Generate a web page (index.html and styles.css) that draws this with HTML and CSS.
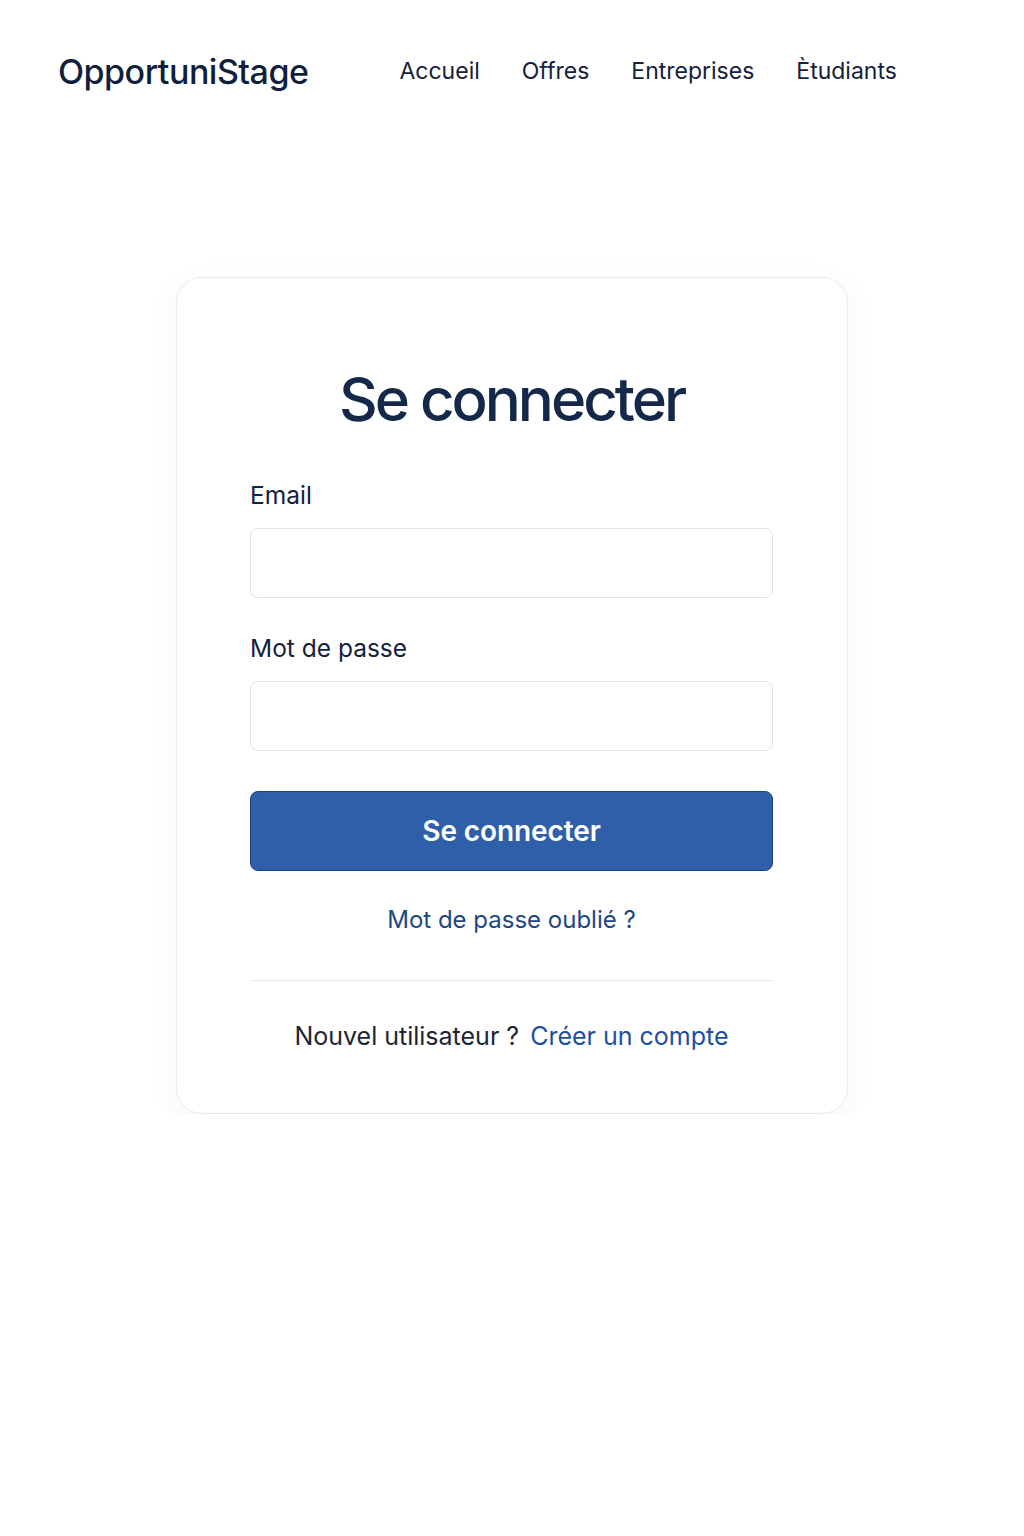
FILE: index.html
```html
<!DOCTYPE html>
<html lang="fr">
<head>
<meta charset="utf-8">
<title>Se connecter - OpportuniStage</title>
<link rel="stylesheet" href="styles.css">
</head>
<body>
<header class="topbar">
  <a class="logo" href="#">OpportuniStage</a>
  <nav class="nav">
    <a href="#">Accueil</a>
    <a href="#">Offres</a>
    <a href="#">Entreprises</a>
    <a href="#">Ètudiants</a>
  </nav>
</header>
<main class="main">
  <section class="card">
    <h1 class="title">Se connecter</h1>
    <form class="form">
      <label class="field">
        <span class="label">Email</span>
        <input class="input" type="email">
      </label>
      <label class="field">
        <span class="label">Mot de passe</span>
        <input class="input" type="password">
      </label>
      <button class="btn" type="button">Se connecter</button>
    </form>
    <a class="forgot" href="#">Mot de passe oublié ?</a>
    <hr class="divider">
    <p class="signup">Nouvel utilisateur ? <a href="#">Créer un compte</a></p>
  </section>
</main>
</body>
</html>
```
FILE: styles.css
```css
* { box-sizing: border-box; }
html, body { margin: 0; padding: 0; background: #fff; }
body {
  font-family: Inter, "Noto Sans", sans-serif;
  color: #14213d;
}
a { text-decoration: none; }
.topbar {
  display: flex;
  align-items: center;
  height: 142px;
  padding: 0 0 0 58px;
}
.logo {
  font-size: 34px;
  font-weight: 500;
  color: #0f1f3d;
  letter-spacing: -0.5px;
}
.nav {
  display: flex;
  gap: 42px;
  margin-left: 91px;
}
.nav a {
  font-size: 23px;
  color: #15213a;
}
.main {
  display: flex;
  justify-content: center;
  padding-top: 135px;
}
.card {
  width: 672px;
  height: 837px;
  border: 1px solid #e6e9f0;
  border-radius: 26px;
  box-shadow: 0 6px 30px rgba(30, 50, 90, 0.05);
  padding: 84px 74px 0 73px;
  display: flex;
  flex-direction: column;
}
.title {
  margin: 0;
  text-align: center;
  font-size: 60px;
  font-weight: 500;
  color: #14284a;
  letter-spacing: -3px;
  line-height: 74px;
}
.form {
  display: flex;
  flex-direction: column;
  margin-top: 44px;
}
.field {
  display: flex;
  flex-direction: column;
  margin-bottom: 35px;
}
.label {
  font-size: 24.5px;
  color: #14213d;
  line-height: 30px;
  margin-bottom: 18px;
}
.input {
  height: 70px;
  border: 1px solid #dde3ec;
  border-radius: 8px;
  background: #fff;
  font: inherit;
}
.btn {
  margin-top: 5px;
  height: 80px;
  background: #2f5fa9;
  border: 1px solid #1b3f8a;
  border-radius: 8px;
  color: #fff;
  font-family: inherit;
  font-size: 28px;
  font-weight: 600;
  letter-spacing: -0.1px;
}
.forgot {
  align-self: center;
  margin-top: 34px;
  font-size: 24px;
  color: #1e4784;
  line-height: 30px;
}
.divider {
  margin: 45px 0 0;
  border: 0;
  border-top: 1px solid #e3e7ee;
}
.signup {
  margin: 40px 0 0;
  text-align: center;
  font-size: 25px;
  color: #1c2536;
  line-height: 30px;
}
.signup a {
  color: #1c4fa3;
  margin-left: 4px;
}
```
